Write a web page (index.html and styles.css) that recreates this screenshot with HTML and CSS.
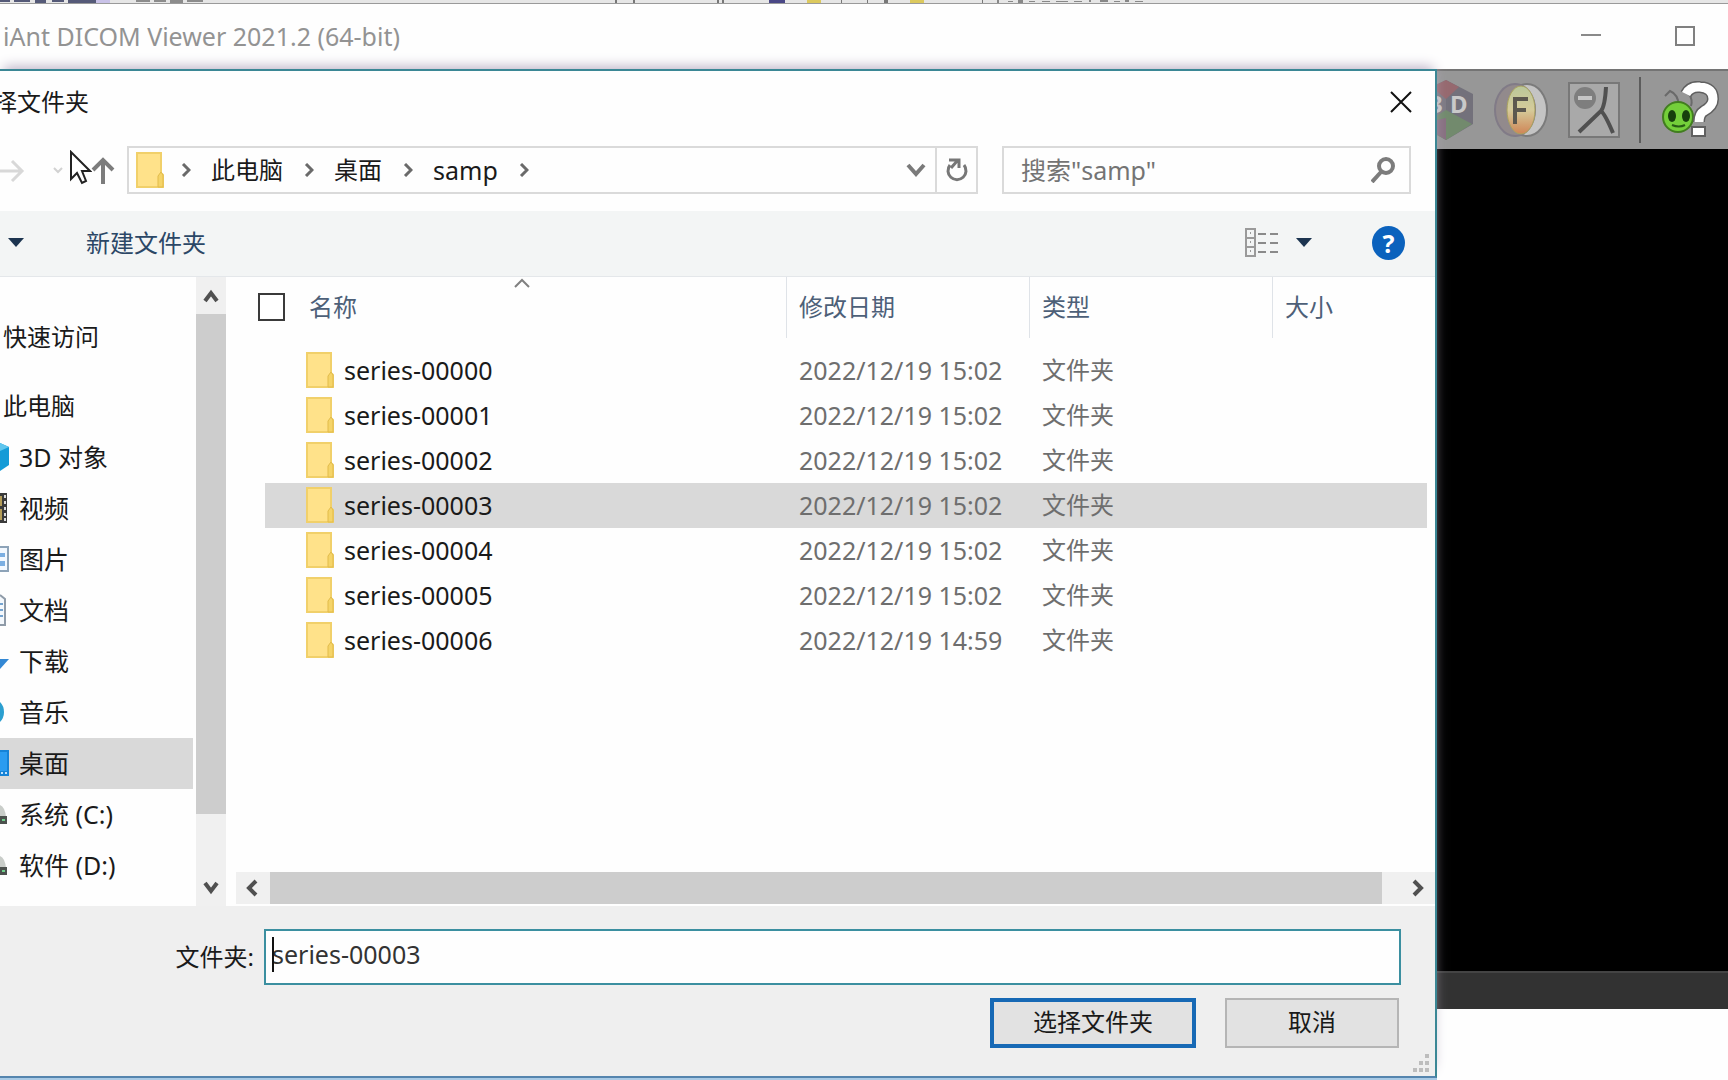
FILE: index.html
```html
<!DOCTYPE html>
<html lang="zh-CN">
<head>
<meta charset="utf-8">
<title>选择文件夹</title>
<link rel="stylesheet" href="styles.css">
</head>
<body>
<svg width="0" height="0" class="defs" aria-hidden="true">
  <symbol id="folder" viewBox="0 0 28 36">
    <path d="M1 1h24v20l2 2v12H1z" fill="#ffe28a" stroke="#f1d06a" stroke-width="2"/>
    <path d="M22 35V24l3-4 2 3v12z" fill="#f5d469" stroke="#e2bb4a"/>
  </symbol>
  <symbol id="crumb" viewBox="0 0 10 14"><path d="M2 1l6 6-6 6" fill="none" stroke="#6a6a6a" stroke-width="3"/></symbol>
  <symbol id="drive" viewBox="0 0 9 24"><path d="M0 3q5 2 6 12H0z" fill="#c9cdc9"/><path d="M0 14h7v8H0z" fill="#4c514e"/><path d="M2 17h3v2H2z" fill="#6fd08c"/></symbol>
</svg>
<div class="desktop">
  <svg class="peek" height="3" aria-hidden="true">
    <g fill="#555a78"><path d="M0 0h10v2H0zM14 0h16v2H14zM35 0h11v3H35zM52 0h12v2H52zM68 0h28v3H68z"/></g>
    <path d="M96 0h14v3H96z" fill="#c9c2e8"/>
    <path d="M136 0h14v2h-14zM154 0h12v2h-12zM170 0h13v3h-13zM187 0h16v2h-16z" fill="#8c8c8c"/>
    <path d="M615 0h2v3h-2zM633 0h2v3h-2zM717 0h2v3h-2zM722 0h2v3h-2zM841 0h1v3h-1zM867 0h1v3h-1zM884 0h4v3h-4zM982 0h1v3h-1z" fill="#777"/>
    <path d="M769 0h16v3h-16z" fill="#4a4886"/>
    <path d="M807 0h14v3h-14zM910 0h14v3h-14z" fill="#dcc95e"/>
    <path d="M997 0h2v3h-2zM1008 1h5v1h-5zM1018 0h5v3h-5zM1029 1h6v1h-6zM1042 1h8v1h-8zM1056 1h12v1h-12zM1074 1h8v1h-8zM1089 0h2v2h-2zM1100 0h8v2h-8zM1114 1h6v1h-6zM1125 0h4v2h-4zM1135 1h8v1h-8z" fill="#888"/>
  </svg>
  <section class="viewer">
    <header class="viewer-title">
      <h1>iAnt DICOM Viewer 2021.2 (64-bit)</h1>
      <button class="win-btn" aria-label="最小化"><svg width="20" height="20"><path d="M0 9h20" stroke="#8a8a8a" stroke-width="2"/></svg></button>
      <button class="win-btn" aria-label="最大化"><svg width="20" height="20"><rect x="1" y="1" width="18" height="18" fill="none" stroke="#808080" stroke-width="2"/></svg></button>
    </header>
    <nav class="viewer-tools">
      <button class="tool" aria-label="3D"><svg width="54" height="64" viewBox="0 0 54 64">
        <path d="M26 2L0 14v32l26 16z" fill="#7d7a83"/><path d="M26 2l27 14v30L26 62z" fill="#73717b"/>
        <path d="M26 2l13 7-13 12-14-12z" fill="#96696f"/><path d="M26 32l26 14-26 16-26-14z" fill="#728a6d"/><path d="M26 40v22L0 46z" fill="#877080"/>
        <text x="9" y="35" class="cube-text">3</text><text x="30" y="35" class="cube-text">D</text></svg></button>
      <button class="tool" aria-label="融合"><svg width="56" height="56" viewBox="0 0 56 56">
        <defs><linearGradient id="fuse" x2="0" y2="1"><stop offset="0" stop-color="#b9c79a"/><stop offset=".5" stop-color="#d6cb9a"/><stop offset="1" stop-color="#cf8556"/></linearGradient></defs>
        <ellipse cx="34" cy="28" rx="20" ry="26" fill="#c4c4c4" stroke="#7b7b7b" stroke-width="2"/>
        <ellipse cx="22" cy="28" rx="20" ry="26" fill="#928a8c" stroke="#817b87" stroke-width="2"/>
        <ellipse cx="28" cy="28" rx="14" ry="24" fill="url(#fuse)" stroke="#aaa35f"/>
        <path d="M22 42V17h13M22 28h11" fill="none" stroke="#5c584f" stroke-width="4"/></svg></button>
      <button class="tool" aria-label="移除"><svg width="52" height="56" viewBox="0 0 52 56">
        <rect x="1" y="1" width="50" height="54" fill="#a9a9a9" stroke="#787878" stroke-width="2"/>
        <circle cx="17" cy="16" r="11" fill="#7e7e7e"/><path d="M10 16h14" stroke="#c5c5c5" stroke-width="4"/>
        <path d="M38 5q-1 19-5 24L11 50M33 29q4 3 12 22" fill="none" stroke="#505050" stroke-width="4"/></svg></button>
      <span class="tool-sep"></span>
      <button class="tool" aria-label="帮助"><svg width="60" height="58" viewBox="0 0 60 58">
        <path d="M19 25Q18 13 10 10L5 15M31 25q2-6-2-12l-6-4" fill="none" stroke="#6a6a6a" stroke-width="2"/>
        <ellipse cx="18" cy="36" rx="15" ry="15" fill="#74cf3a" stroke="#427d20" stroke-width="2"/>
        <ellipse cx="12" cy="35" rx="4" ry="6" fill="#17400d"/><ellipse cx="26" cy="35" rx="4" ry="6" fill="#17400d"/><path d="M12 44q7 3 13 0" stroke="#285d15" stroke-width="2" fill="none"/>
        <path d="M26 13q4-8 14-7 13 1 13 12 0 7-9 12-5 3-5 11" fill="none" stroke="#606060" stroke-width="12"/>
        <path d="M26 13q4-8 14-7 13 1 13 12 0 7-9 12-5 3-5 11" fill="none" stroke="#fff" stroke-width="9"/>
        <rect x="32" y="46" width="13" height="9" fill="#fff" stroke="#606060" stroke-width="2"/></svg></button>
    </nav>
    <div class="viewport"></div>
    <footer class="viewer-status"></footer>
    <div class="below"></div>
  </section>

  <section class="dialog" role="dialog" aria-labelledby="dialog-title">
    <header class="dialog-title">
      <h2 id="dialog-title">择文件夹</h2>
      <button class="close" aria-label="关闭"><svg width="22" height="22"><path d="M1 1l20 20M21 1L1 21" stroke="#111" stroke-width="2"/></svg></button>
    </header>
    <div class="nav-row">
      <div class="nav-buttons">
        <button aria-label="前进"><svg width="26" height="26"><path d="M0 13h22M12 3l10 10-10 10" fill="none" stroke="#d8d8d8" stroke-width="3"/></svg></button>
        <button aria-label="最近位置"><svg width="10" height="8"><path d="M1 1l4 4 4-4" fill="none" stroke="#d2d2d2" stroke-width="2"/></svg></button>
        <button aria-label="上移"><svg width="26" height="28"><path d="M13 27V4M3 13L13 3l10 10" fill="none" stroke="#7c7c7c" stroke-width="4"/></svg></button>
      </div>
      <div class="address">
        <svg class="addr-folder" width="28" height="36"><use href="#folder"/></svg>
        <svg class="crumb" width="10" height="14"><use href="#crumb"/></svg>
        <a href="#">此电脑</a>
        <svg class="crumb" width="10" height="14"><use href="#crumb"/></svg>
        <a href="#">桌面</a>
        <svg class="crumb" width="10" height="14"><use href="#crumb"/></svg>
        <a href="#" class="latin">samp</a>
        <svg class="crumb" width="10" height="14"><use href="#crumb"/></svg>
        <button class="addr-drop" aria-label="历史"><svg width="20" height="14"><path d="M2 2l8 9 8-9" fill="none" stroke="#7a7a7a" stroke-width="4"/></svg></button>
        <button class="addr-refresh" aria-label="刷新"><svg width="24" height="28" viewBox="0 0 24 28"><path d="M5 9a9 9 0 1 0 14 0" fill="none" stroke="#777" stroke-width="3"/><path d="M4 4h10v8M13 4l-7 8" fill="none" stroke="#777" stroke-width="3"/></svg></button>
      </div>
      <div class="search">
        <input type="search" aria-label="搜索" placeholder='搜索"samp"'>
        <svg width="24" height="26" viewBox="0 0 24 26"><circle cx="15" cy="9" r="7" fill="none" stroke="#7c7c7c" stroke-width="4"/><path d="M10 15L1 25" stroke="#7c7c7c" stroke-width="4"/></svg>
      </div>
    </div>
    <div class="command-bar">
      <button class="organize" aria-label="组织"><svg width="16" height="10"><path d="M0 0h16L8 9z" fill="#1c3450"/></svg></button>
      <button class="new-folder">新建文件夹</button>
      <button class="view" aria-label="更改视图"><svg width="34" height="30" viewBox="0 0 34 30">
        <path d="M1 1h9v27H1zM1 10h9M1 19h9" fill="none" stroke="#9a9a9a" stroke-width="2"/><path d="M5 5h1M5 14h1M5 23h1" stroke="#9a9a9a" stroke-width="2"/>
        <path d="M13 6h8M25 6h8M13 15h8M25 15h8M13 24h8M25 24h8" stroke="#8a8a8a" stroke-width="2"/></svg></button>
      <button class="view-drop" aria-label="更多选项"><svg width="16" height="10"><path d="M0 0h16L8 9z" fill="#1c3450"/></svg></button>
      <button class="help" aria-label="帮助">?</button>
    </div>
    <div class="content">
      <nav class="sidebar">
        <a href="#" class="root">快速访问</a>
        <a href="#" class="root pc">此电脑</a>
        <a href="#"><svg width="9" height="30"><path d="M0 1l9 4v18l-9 6z" fill="#149bd7"/><path d="M0 1l9 4-9 4z" fill="#5fc6ee"/></svg>3D 对象</a>
        <a href="#"><svg width="9" height="30"><path d="M0 0h7v30H0z" fill="#3a3a3a"/><path d="M0 3h2v10H0zM0 16h2v11H0z" fill="#b59d57"/><path d="M4 2h2v3H4zM4 8h2v3H4zM4 14h2v3H4zM4 20h2v3H4zM4 25h2v3H4z" fill="#ddd"/></svg>视频</a>
        <a href="#"><svg width="9" height="26"><path d="M0 1h8v24H0" fill="#f2f8ff" stroke="#8da3b8" stroke-width="2"/><path d="M0 7h5v4H0zM0 15h5v5H0z" fill="#7aaee2"/></svg>图片</a>
        <a href="#"><svg width="9" height="32"><path d="M0 1l5 4v26H0" fill="#f4f8fc" stroke="#8f9ba8" stroke-width="2"/><path d="M0 10h3M0 16h3M0 22h3" stroke="#74a3cf" stroke-width="2"/></svg>文档</a>
        <a href="#"><svg width="9" height="26"><path d="M0 11h9L0 21z" fill="#3388d4"/></svg>下载</a>
        <a href="#"><svg width="9" height="26"><path d="M0 3q4 4 4 10T0 23z" fill="#2b9fd0"/></svg>音乐</a>
        <a href="#" class="current"><svg width="9" height="26"><path d="M0 0h9v26H0z" fill="#1683d6"/><path d="M0 2h7v19H0z" fill="#2b9cf0"/><path d="M1 22h2v2H1zM5 22h2v2H5z" fill="#bfe2ff"/></svg>桌面</a>
        <a href="#"><svg width="9" height="24"><use href="#drive"/></svg>系统 (C:)</a>
        <a href="#"><svg width="9" height="24"><use href="#drive"/></svg>软件 (D:)</a>
      </nav>
      <div class="vscroll">
        <button aria-label="向上"><svg width="16" height="16"><path d="M2 13l6-8 6 8" fill="none" stroke="#505050" stroke-width="4"/></svg></button>
        <div class="vtrack"><div class="vthumb"></div></div>
        <button aria-label="向下"><svg width="16" height="16"><path d="M2 3l6 8 6-8" fill="none" stroke="#505050" stroke-width="4"/></svg></button>
      </div>
      <div class="files">
        <div class="list">
          <table>
            <colgroup><col class="c-name"><col class="c-date"><col class="c-type"><col></colgroup>
            <thead><tr>
              <th><div class="name-head"><input type="checkbox" aria-label="全选"><span>名称</span><svg class="sort" width="18" height="10"><path d="M2 9l7-7 7 7" fill="none" stroke="#808080" stroke-width="2"/></svg></div></th>
              <th><div class="head">修改日期</div></th><th><div class="head">类型</div></th><th><div class="head">大小</div></th>
            </tr></thead>
            <tbody>
              <tr><td><div class="file"><svg width="28" height="36"><use href="#folder"/></svg>series-00000</div></td><td class="date">2022/12/19 15:02</td><td class="type">文件夹</td><td></td></tr>
              <tr><td><div class="file"><svg width="28" height="36"><use href="#folder"/></svg>series-00001</div></td><td class="date">2022/12/19 15:02</td><td class="type">文件夹</td><td></td></tr>
              <tr><td><div class="file"><svg width="28" height="36"><use href="#folder"/></svg>series-00002</div></td><td class="date">2022/12/19 15:02</td><td class="type">文件夹</td><td></td></tr>
              <tr class="selected"><td><div class="file"><svg width="28" height="36"><use href="#folder"/></svg>series-00003</div></td><td class="date">2022/12/19 15:02</td><td class="type">文件夹</td><td></td></tr>
              <tr><td><div class="file"><svg width="28" height="36"><use href="#folder"/></svg>series-00004</div></td><td class="date">2022/12/19 15:02</td><td class="type">文件夹</td><td></td></tr>
              <tr><td><div class="file"><svg width="28" height="36"><use href="#folder"/></svg>series-00005</div></td><td class="date">2022/12/19 15:02</td><td class="type">文件夹</td><td></td></tr>
              <tr><td><div class="file"><svg width="28" height="36"><use href="#folder"/></svg>series-00006</div></td><td class="date">2022/12/19 14:59</td><td class="type">文件夹</td><td></td></tr>
            </tbody>
          </table>
        </div>
        <div class="hscroll">
          <button aria-label="向左"><svg width="16" height="18"><path d="M11 2L4 9l7 7" fill="none" stroke="#505050" stroke-width="4"/></svg></button>
          <div class="hthumb"></div>
          <button aria-label="向右"><svg width="16" height="18"><path d="M4 2l7 7-7 7" fill="none" stroke="#505050" stroke-width="4"/></svg></button>
        </div>
      </div>
    </div>
    <form class="dialog-footer">
      <div class="name-row">
        <label for="folder-name">文件夹:</label>
        <div class="name-field"><input id="folder-name" type="text" value="series-00003"><span class="caret"></span></div>
      </div>
      <div class="actions">
        <button type="button" class="primary">选择文件夹</button>
        <button type="button" class="cancel">取消</button>
      </div>
      <svg class="grip" width="18" height="20" aria-hidden="true"><path d="M13 1h4v4h-4zM7 8h4v4H7zM13 8h4v4h-4zM1 15h4v4H1zM7 15h4v4H7zM13 15h4v4h-4z" fill="#bdbdbd"/></svg>
    </form>
    <svg class="pointer" width="22" height="36" viewBox="0 0 22 36" aria-hidden="true"><path d="M1 2v27l6-6 5 10 4-2-4-10h8z" fill="#fff" stroke="#222" stroke-width="2"/></svg>
  </section>
</div>
</body>
</html>
```
FILE: styles.css
```css
* { box-sizing: border-box; }
body {
  margin: 0;
  font-family: "Noto Sans", "Noto Sans CJK SC", sans-serif;
  font-size: 24px;
  line-height: 32px;
  color: #1a1a1a;
}
button {
  display: flex;
  align-items: center;
  justify-content: center;
  margin: 0;
  padding: 0;
  border: 0;
  background: none;
  font: inherit;
  color: inherit;
}
a { color: inherit; text-decoration: none; }
h1, h2 { margin: 0; font-weight: 400; white-space: nowrap; }
svg { display: block; flex: none; }
.defs { position: absolute; }

.desktop {
  position: relative;
  display: flex;
  flex-direction: column;
  min-height: 100vh;
  overflow: hidden;
  background: #e6e6e6;
}
.peek { width: 100%; }

/* viewer window behind the dialog */
.viewer { flex: 1; display: flex; flex-direction: column; background: #fefefe; border-top: 1px solid #9a9a9a; }
.viewer-title { display: flex; align-items: center; height: 65px; padding: 0 33px 2px 3px; gap: 74px; }
.viewer-title h1 { flex: 1; font-size: 25px; color: #939393; }
.win-btn { width: 20px; height: 20px; }
.viewer-tools {
  display: flex;
  align-items: center;
  justify-content: flex-end;
  gap: 19px;
  height: 80px;
  padding: 0 8px 0 0;
  background: #979797;
  border-top: 2px solid #747474;
}
.cube-text { font: bold 24px "Noto Sans", sans-serif; fill: #c9c9c9; }
.tool-sep { width: 2px; height: 66px; background: #5c5c5c; }
.viewport { flex: 1; background: #000; }
.viewer-status { height: 38px; background: #323232; border-top: 2px solid #444; }
.below { height: 71px; }

/* folder dialog floating over the viewer */
.dialog {
  position: absolute;
  top: 69px;
  left: 0;
  right: 291px;
  bottom: 2px;
  display: flex;
  flex-direction: column;
  background: #fefefe;
  border: 2px solid #3b8795;
  border-left: 0;
  border-bottom-color: #5585ae;
  box-shadow: 0 -6px 12px -4px #b9aec4, 0 4px 0 #a9cbe6;
}
.dialog-title { display: flex; align-items: center; justify-content: space-between; height: 63px; padding: 0 23px 2px 0; }
.dialog-title h2 { margin-left: -7px; font-size: 24px; }

.nav-row { display: flex; padding: 12px 24px 17px 0; }
.nav-buttons { display: flex; align-items: center; width: 127px; padding-top: 2px; gap: 27px; }
.address { flex: 1; display: flex; align-items: center; height: 48px; border: 2px solid #dadada; padding-left: 7px; }
.addr-folder { margin-right: 17px; }
.crumb { margin-right: 20px; }
.address a { margin-right: 21px; }
.latin { font-size: 25px; }
.addr-drop { margin-left: auto; width: 38px; height: 44px; }
.addr-refresh { width: 41px; height: 44px; border-left: 2px solid #dadada; }
.search { display: flex; align-items: center; width: 409px; height: 48px; margin-left: 24px; padding: 0 14px 0 17px; border: 2px solid #dadada; }
.search input { flex: 1; min-width: 0; padding: 0; border: 0; outline: 0; background: none; font: inherit; font-size: 25px; }
.search input::placeholder { color: #747474; opacity: 1; }

.command-bar { display: flex; align-items: center; height: 66px; padding: 0 30px 2px 0; background: #f3f5f5; border-bottom: 1px solid #e4e7ea; color: #2b4766; }
.organize { width: 32px; height: 32px; }
.new-folder { margin-left: 54px; }
.view { margin-left: auto; }
.view-drop { width: 16px; height: 32px; margin: 0 60px 0 17px; }
.help { width: 33px; height: 34px; border-radius: 50%; background: #0b62bd; color: #fff; font-size: 25px; font-weight: 700; }

.content { flex: 1; display: flex; min-height: 629px; }
.sidebar { width: 193px; padding-top: 35px; }
.sidebar a { display: flex; align-items: center; gap: 10px; height: 51px; padding-bottom: 1px; font-size: 25px; white-space: nowrap; }
.sidebar .root { padding-left: 3px; font-size: 24px; }
.sidebar .pc { margin-top: 18px; }
.sidebar .current { background: #d9d9d9; }
.vscroll { display: flex; flex-direction: column; width: 30px; margin-left: 3px; background: #f0f0f0; }
.vscroll button { height: 37px; }
.vtrack { flex: 1; }
.vthumb { height: 90%; background: #cdcdcd; }

.files { flex: 1; min-width: 0; display: flex; flex-direction: column; padding: 0 0 2px 10px; }
.list { flex: 1; padding: 0 8px 0 29px; }
table { width: 100%; table-layout: fixed; border-collapse: collapse; }
.c-name { width: 521px; }
.c-date, .c-type { width: 243px; }
th { padding: 0 0 10px; font-weight: 400; text-align: left; color: #4d6078; }
.head { display: flex; align-items: center; height: 61px; padding: 0 0 2px 12px; border-left: 1px solid #dfe3e8; }
.name-head { position: relative; display: flex; align-items: center; gap: 24px; height: 61px; margin-left: -7px; padding-bottom: 2px; }
.name-head input { appearance: none; width: 27px; height: 28px; margin: 0; border: 2px solid #3a3a3a; background: #fff; }
.sort { position: absolute; left: calc(50% - 9px); top: 1px; }
td { height: 45px; padding: 0 0 2px; }
.file { display: flex; align-items: center; gap: 10px; padding-left: 41px; font-size: 25px; }
.date { padding-left: 13px; font-size: 25px; color: #6e6e6e; }
.type { padding-left: 13px; color: #6e6e6e; }
.selected { background: #d9d9d9; }
.hscroll { display: flex; height: 32px; background: #f0f0f0; }
.hscroll button { width: 34px; }
.hthumb { flex: 1; margin-right: 19px; background: #cdcdcd; }

.dialog-footer { position: relative; padding: 23px 34px 28px 0; background: #efefef; }
.name-row { display: flex; align-items: center; }
.name-row label { width: 264px; padding-right: 10px; text-align: right; }
.name-field { position: relative; flex: 1; }
.name-field input { display: block; width: 100%; height: 56px; padding: 0 6px 6px; border: 2px solid #3b8fa0; outline: 0; background: #fefefe; font: inherit; font-size: 25px; color: #333; }
.caret { position: absolute; left: 8px; top: 8px; width: 2px; height: 35px; background: #111; }
.actions { display: flex; justify-content: flex-end; gap: 29px; padding: 13px 2px 0 0; }
.actions button { height: 50px; padding-bottom: 2px; background: #e2e2e2; }
.actions .primary { width: 206px; border: 4px solid #1769b5; }
.actions .cancel { width: 174px; border: 2px solid #b5b5b5; }
.grip { position: absolute; right: 5px; bottom: 3px; }

.pointer { position: absolute; left: 70px; top: 79px; }
```
